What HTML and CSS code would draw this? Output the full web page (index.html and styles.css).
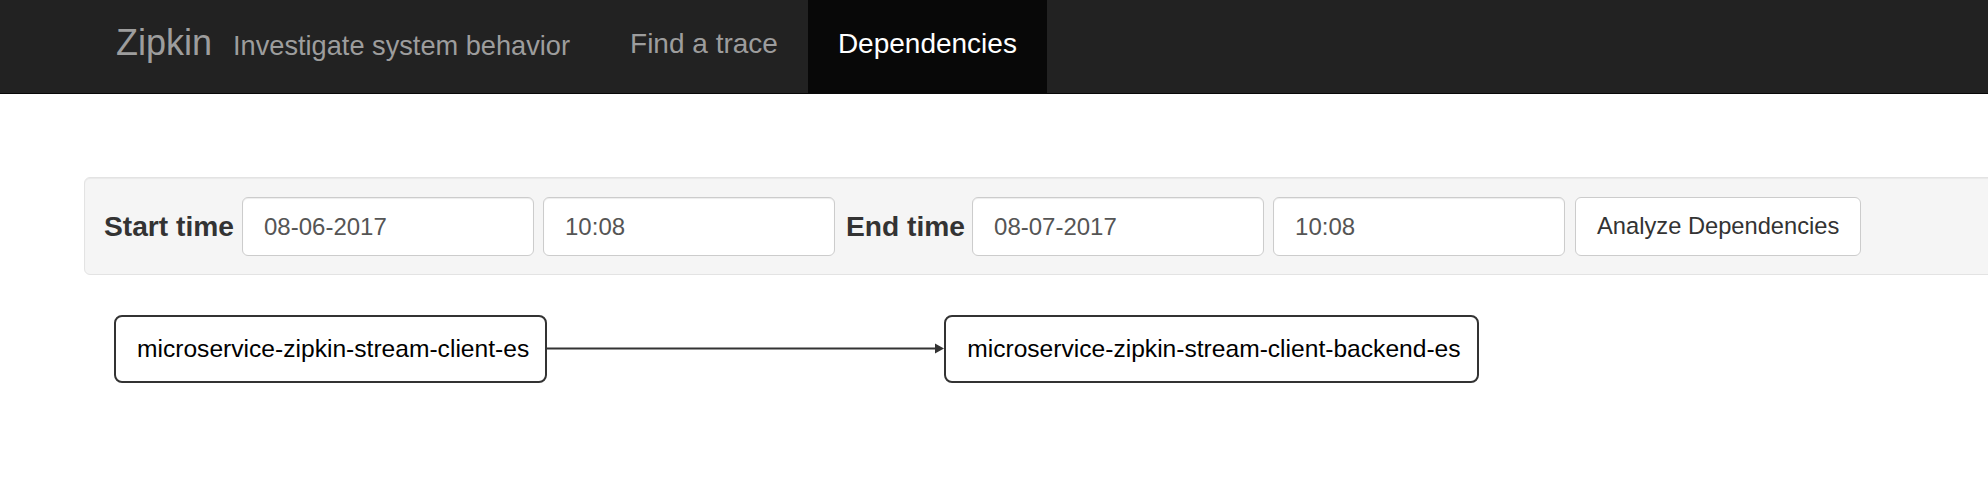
FILE: index.html
```html
<!DOCTYPE html>
<html lang="en">
<head>
    <meta charset="UTF-8">
    <meta name="viewport" content="width=device-width, initial-scale=1.0">
    <title>Zipkin - Dependencies</title>
    <link rel="stylesheet" href="styles.css">
</head>
<body>
    <nav class="navbar">
        <a class="brand" href="#">Zipkin</a>
        <span class="tagline">Investigate system behavior</span>
        <ul class="nav">
            <li><a href="#">Find a trace</a></li>
            <li class="active"><a href="#">Dependencies</a></li>
        </ul>
    </nav>
    <main class="content">
        <form class="well" onsubmit="return false">
            <label class="field-label">Start time</label>
            <input type="text" class="form-input" value="08-06-2017">
            <input type="text" class="form-input" value="10:08">
            <label class="field-label end-label">End time</label>
            <input type="text" class="form-input" value="08-07-2017">
            <input type="text" class="form-input" value="10:08">
            <button type="submit" class="btn">Analyze Dependencies</button>
        </form>
        <div class="graph">
            <div class="node">microservice-zipkin-stream-client-es</div>
            <svg class="edge" width="397" height="68" viewBox="0 0 397 68">
                <line x1="0" y1="33.5" x2="389" y2="33.5" stroke="#333" stroke-width="2"/>
                <polygon points="388,28.5 397,33.5 388,38.5" fill="#333"/>
            </svg>
            <div class="node">microservice-zipkin-stream-client-backend-es</div>
        </div>
    </main>
</body>
</html>
```

FILE: styles.css
```css
body {
    margin: 0;
    font-family: 'Liberation Sans', Arial, sans-serif;
    background: #fff;
    color: #333;
    overflow: hidden;
}
.navbar {
    display: flex;
    height: 93px;
    padding-left: 116px;
    background-color: #222;
    border-bottom: 1px solid #080808;
}
.brand {
    font-size: 36px;
    line-height: 85px;
    color: #9d9d9d;
    text-decoration: none;
}
.tagline {
    margin-left: 21px;
    font-size: 27.2px;
    line-height: 91px;
    color: #9d9d9d;
}
.nav {
    display: flex;
    list-style: none;
    margin: 0 0 0 30px;
    padding: 0;
}
.nav li a {
    display: block;
    padding: 0 30px;
    font-size: 28px;
    line-height: 88px;
    color: #9d9d9d;
    text-decoration: none;
}
.nav li.active {
    background-color: #080808;
}
.nav li.active a {
    color: #fff;
}
.content {
    padding: 83px 0 0 84px;
}
.well {
    display: flex;
    align-items: center;
    margin: 0 -60px 0 0;
    padding: 19px 18px 18px 19px;
    background-color: #f5f5f5;
    border: 1px solid #e3e3e3;
    border-radius: 6px;
    box-shadow: inset 0 1px 1px rgba(0, 0, 0, 0.05);
}
.field-label {
    margin-right: 8px;
    font-size: 28.2px;
    font-weight: bold;
    color: #333;
}
.end-label {
    margin-left: 2px;
    margin-right: 7px;
}
.form-input {
    box-sizing: border-box;
    width: 292px;
    height: 59px;
    margin: 0 9px 0 0;
    padding: 0 21px;
    font-family: inherit;
    font-size: 24px;
    color: #555;
    background: #fff;
    border: 1px solid #ccc;
    border-radius: 6px;
    box-shadow: inset 0 1px 1px rgba(0, 0, 0, 0.075);
    outline: none;
}
.btn {
    box-sizing: border-box;
    height: 59px;
    margin-left: 1px;
    padding: 0 21px;
    font-family: inherit;
    font-size: 23.7px;
    color: #333;
    background: #fff;
    border: 1px solid #ccc;
    border-radius: 6px;
    cursor: pointer;
}
.graph {
    display: flex;
    align-items: center;
    margin: 40px 0 0 30px;
}
.node {
    box-sizing: border-box;
    height: 68px;
    padding: 0 16px 0 21px;
    font-size: 24.6px;
    line-height: 64px;
    color: #000;
    background: #fff;
    border: 2px solid #333;
    border-radius: 8px;
    white-space: nowrap;
}
.edge {
    display: block;
    flex: none;
}
```
